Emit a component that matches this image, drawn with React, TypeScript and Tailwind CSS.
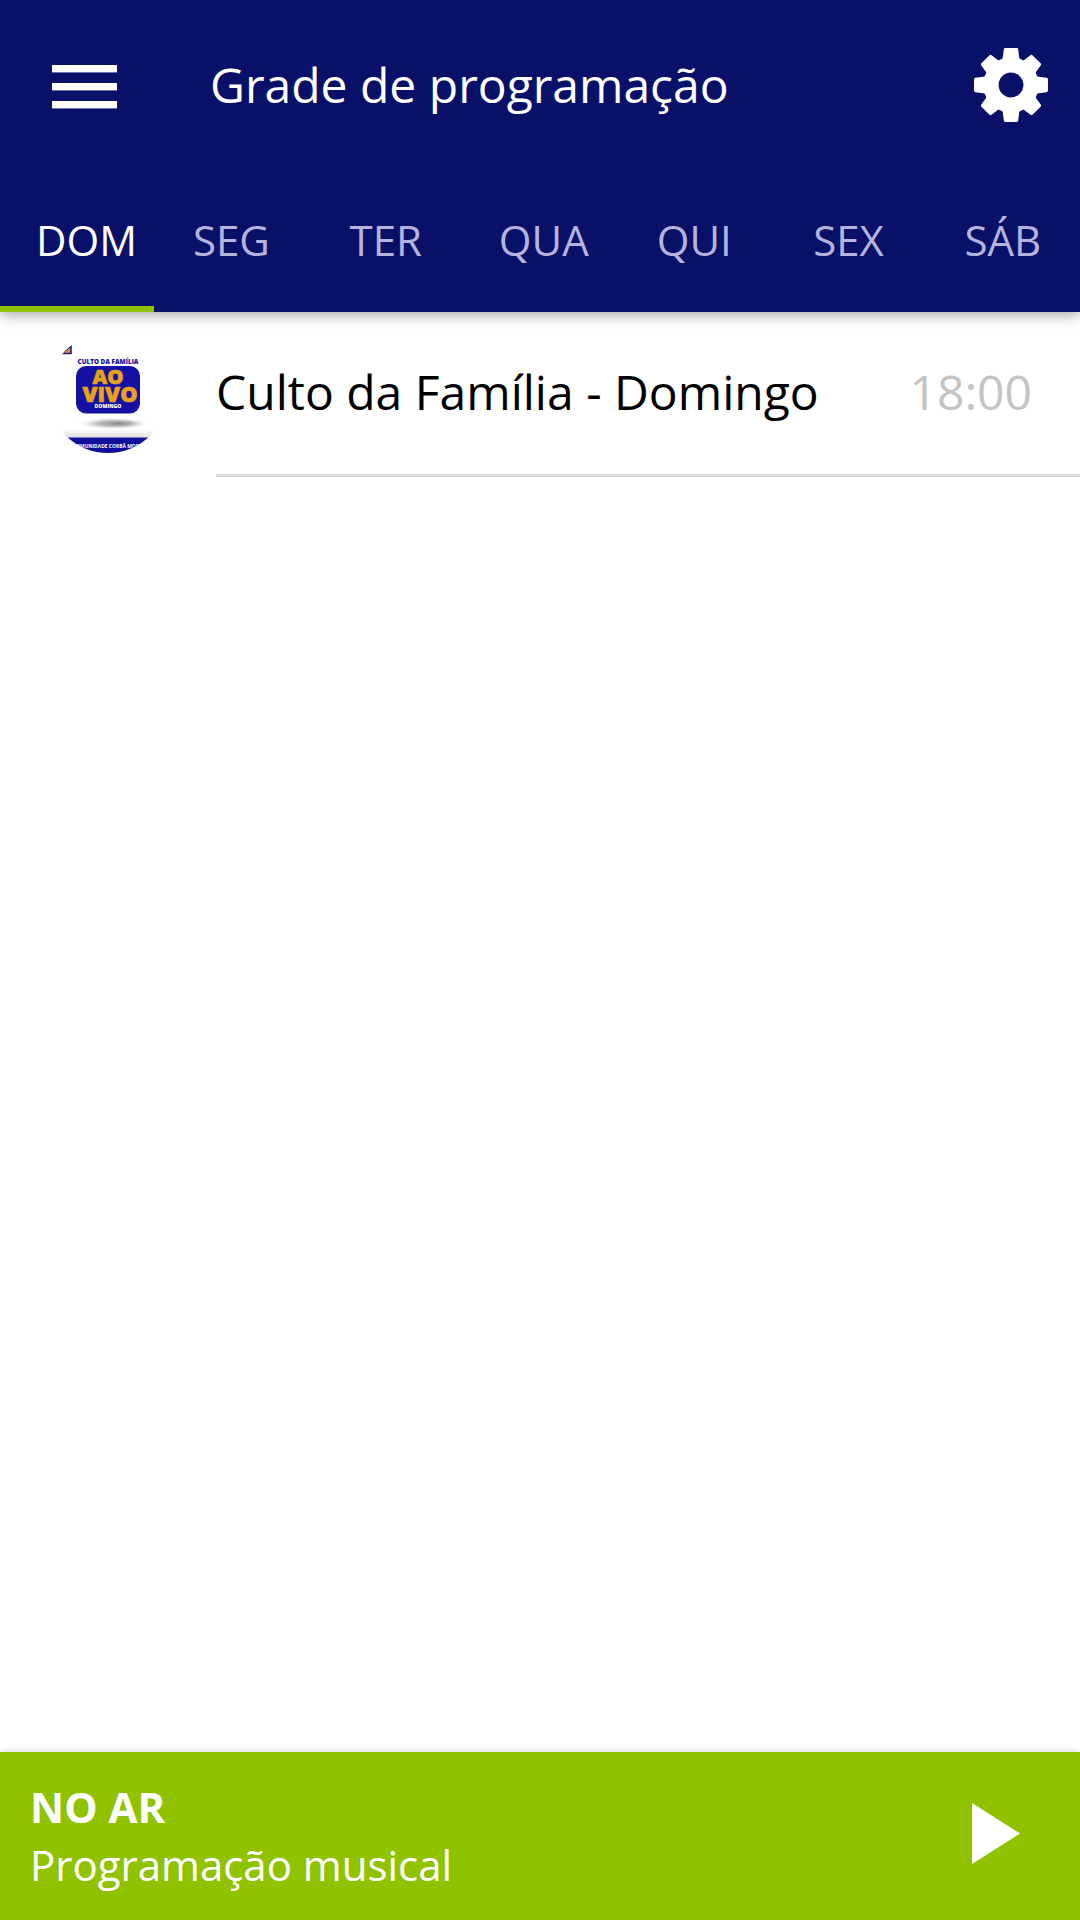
import { useState } from 'react';

interface Program {
  title: string;
  time: string;
}

const DAYS = ['DOM', 'SEG', 'TER', 'QUA', 'QUI', 'SEX', 'SÁB'];

const SCHEDULE: Record<string, Program[]> = {
  DOM: [{ title: 'Culto da Família - Domingo', time: '18:00' }],
};

function MenuIcon() {
  return (
    <svg className="w-[65px] h-[44px]" viewBox="0 0 65 44" fill="#fff">
      <rect x="0" y="0" width="65" height="7.4" />
      <rect x="0" y="18" width="65" height="7.4" />
      <rect x="0" y="36" width="65" height="7.4" />
    </svg>
  );
}

function GearIcon() {
  // one straight tooth and one diagonal tooth, repeated every 90 degrees
  const tooth = 'M0 0 L-12.6 -24.6 L-9.3 -26 Q-8.4 -26.4 -8.2 -27.6 L-7.2 -35.6 Q-7 -37 -5.6 -37 L5.6 -37 Q7 -37 7.2 -35.6 L8.2 -27.6 Q8.4 -26.4 9.3 -26 L12.6 -24.6 L19.4 -29.7 Q20.6 -30.6 21.7 -29.6 L29.6 -21.7 Q30.6 -20.6 29.7 -19.4 L24.6 -12.6 L24 0 Z';
  return (
    <svg className="w-[74px] h-[74px]" viewBox="-37 -37 74 74" fill="#fff">
      {[0, 90, 180, 270].map((angle) => (
        <path key={angle} d={tooth} transform={`rotate(${angle})`} />
      ))}
      <circle r="12.4" fill="#081068" />
    </svg>
  );
}

function ProgramLogo() {
  return (
    <svg className="w-[120px] h-[120px] shrink-0" viewBox="0 0 120 120" fontFamily="'Open Sans', sans-serif" textAnchor="middle">
      <defs>
        <clipPath id="logo-clip">
          <circle cx="60" cy="60" r="60" />
        </clipPath>
        <radialGradient id="logo-shadow" fx="0.6">
          <stop offset="0" stopColor="#888" />
          <stop offset="0.5" stopColor="#b0b0b0" stopOpacity="0.8" />
          <stop offset="1" stopColor="#fff" stopOpacity="0" />
        </radialGradient>
        <linearGradient id="logo-strip" x1="0" y1="0" x2="0" y2="1">
          <stop offset="0" stopColor="#fff" />
          <stop offset="1" stopColor="#e0e0e0" />
        </linearGradient>
      </defs>
      <g clipPath="url(#logo-clip)">
        <path d="M23 13 V20.5 H14 Z" fill="#d9952a" stroke="#2a1f7d" strokeWidth="1.6" />
        <text x="60" y="31" fontSize="7.2" fontWeight="800" fill="#11109a" textLength="61" lengthAdjust="spacingAndGlyphs">CULTO DA FAMÍLIA</text>
        <rect x="28" y="33" width="64" height="47.5" rx="10" fill="#1410a4" />
        <text x="60" y="51.3" fontSize="19.4" fontWeight="800" fill="#e9a11c" stroke="#e9a11c" strokeWidth="0.6" textLength="31" lengthAdjust="spacingAndGlyphs">AO</text>
        <text x="62" y="68.5" fontSize="20.6" fontWeight="800" fill="#e9a11c" stroke="#e9a11c" strokeWidth="0.6" textLength="55" lengthAdjust="spacingAndGlyphs">VIVO</text>
        <text x="60" y="75.2" fontSize="5.4" fontWeight="800" fill="#fff" textLength="27" lengthAdjust="spacingAndGlyphs">DOMINGO</text>
        <ellipse cx="64" cy="90.5" rx="37" ry="6" fill="url(#logo-shadow)" />
        <rect x="14" y="96" width="92" height="8.5" fill="url(#logo-strip)" />
        <rect x="0" y="104.5" width="120" height="16" fill="#11109a" />
        <text x="60.5" y="115" fontSize="5.6" fontWeight="700" fill="#fff" textLength="71" lengthAdjust="spacingAndGlyphs">COMUNIDADE CORBÃ MORIA</text>
      </g>
    </svg>
  );
}

export default function App() {
  const [activeDay, setActiveDay] = useState('DOM');
  const programs = SCHEDULE[activeDay] ?? [];

  return (
    <div className="flex h-[1920px] w-[1080px] flex-col overflow-hidden bg-white font-['Open_Sans','Noto_Sans',sans-serif]">
      <header className="z-10 shrink-0 bg-[#081068] shadow-[0_2px_14px_rgba(0,0,0,0.4)]">
        <div className="flex h-[168px] items-center pl-[52px] pr-8">
          <button className="mt-[6px]" aria-label="Menu">
            <MenuIcon />
          </button>
          <h1 className="ml-[93px] mt-[2px] flex-1 text-[48px] leading-[66px] text-white">Grade de programação</h1>
          <button className="mt-[2px]" aria-label="Configurações">
            <GearIcon />
          </button>
        </div>
        <nav className="grid h-[144px] grid-cols-7">
          {DAYS.map((day) => (
            <button
              key={day}
              onClick={() => setActiveDay(day)}
              className={
                day === activeDay
                  ? 'min-w-0 border-b-[6px] border-[#90c300] px-9 pt-1 text-[42px] text-white'
                  : 'min-w-0 border-b-[6px] border-transparent px-9 pt-1 text-[42px] text-[#b4b5dd]'
              }
            >
              <span className="block whitespace-nowrap">{day}</span>
            </button>
          ))}
        </nav>
      </header>

      <main className="flex-1">
        {programs.map((program) => (
          <div key={program.title} className="flex h-[165px] pl-12">
            <div className="flex h-[162px] items-center">
              <ProgramLogo />
            </div>
            <div className="ml-12 flex flex-1 items-center justify-between border-b-[3px] border-[#dcdcdc] pb-[2px] pr-12 text-[48px] leading-[66px]">
              <span className="text-black">{program.title}</span>
              <span className="text-[#c4c4c4]">{program.time}</span>
            </div>
          </div>
        ))}
      </main>

      <footer className="flex h-[168px] shrink-0 items-center justify-between bg-[#8fc300] pl-[30px] pr-[60px] text-[42px] text-white shadow-[0_0_6px_rgba(0,0,0,0.2)]">
        <div>
          <p className="font-bold leading-[57px]">NO AR</p>
          <p className="leading-[59px]">Programação musical</p>
        </div>
        <button className="mb-[5px]" aria-label="Reproduzir">
          <svg className="h-[61px] w-12" viewBox="0 0 48 61" fill="#fff">
            <path d="M0 0 L48 30.5 L0 61 Z" />
          </svg>
        </button>
      </footer>
    </div>
  );
}
